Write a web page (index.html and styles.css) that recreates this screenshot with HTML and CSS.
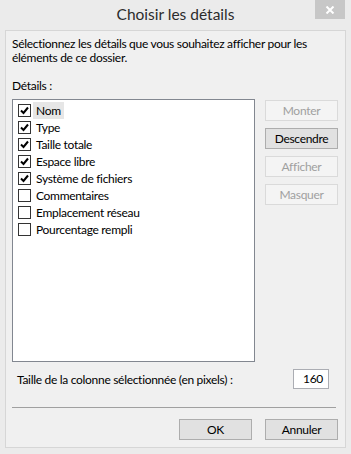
FILE: index.html
```html
<!DOCTYPE html>
<html lang="fr">
<head>
	<meta charset="utf-8">
	<title>Choisir les détails</title>
	<link rel="stylesheet" href="styles.css">
</head>
<body>
	<div class="window">
		<div class="titlebar">
			<span class="title">Choisir les détails</span>
			<!-- Close button -->
			<span class="close">
				<svg width="10" height="8" viewBox="0 0 10 8">
					<path d="M1.5 0.5 L8.5 7.5 M8.5 0.5 L1.5 7.5" stroke="#fff" stroke-width="2"/>
				</svg>
			</span>
		</div>

		<div class="client">
			<p class="desc">Sélectionnez les détails que vous souhaitez afficher pour les éléments de ce dossier.</p>
			<div class="label">Détails :</div>

			<div class="main">
				<ul class="list">
					<li><span class="box checked"></span><span class="name focus">Nom</span></li>
					<li><span class="box checked"></span><span class="name">Type</span></li>
					<li><span class="box checked"></span><span class="name">Taille totale</span></li>
					<li><span class="box checked"></span><span class="name">Espace libre</span></li>
					<li><span class="box checked"></span><span class="name">Système de fichiers</span></li>
					<li><span class="box"></span><span class="name">Commentaires</span></li>
					<li><span class="box"></span><span class="name">Emplacement réseau</span></li>
					<li><span class="box"></span><span class="name">Pourcentage rempli</span></li>
				</ul>
				<div class="side">
					<button type="button" class="btn" disabled>Monter</button>
					<button type="button" class="btn">Descendre</button>
					<button type="button" class="btn" disabled>Afficher</button>
					<button type="button" class="btn" disabled>Masquer</button>
				</div>
			</div>

			<div class="width-row">
				<span>Taille de la colonne sélectionnée (en pixels) :</span>
				<span class="field">160</span>
			</div>

			<div class="separator"></div>

			<div class="actions">
				<button type="button" class="btn">OK</button>
				<button type="button" class="btn">Annuler</button>
			</div>
		</div>
	</div>
</body>
</html>
```

FILE: styles.css
```css
:root {
	--frame: #ebebeb;
	--face: #f0f0f0;
	--text: #000;
	--disabled: #a0a0a0;
}

* { box-sizing: border-box; }

body {
	margin: 0;
	background: var(--frame);
	color: var(--text);
	font-family: Lato, "Noto Sans", sans-serif;
	font-size: 12px;
	letter-spacing: -0.3px;
}

.window {
	width: 351px;
	height: 454px;
}

.titlebar {
	position: relative;
	height: 30px;
	text-align: center;
}

.title {
	display: inline-block;
	padding-top: 4px;
	font-size: 15.5px;
	line-height: 20px;
	letter-spacing: 0;
	color: #2b2b2b;
}

.close {
	position: absolute;
	top: 0;
	right: 6px;
	width: 30px;
	height: 19px;
	background: #c7c7c7;
	display: flex;
	align-items: center;
	justify-content: center;
}

.client {
	margin: 0 5px;
	height: 418px;
	background: var(--face);
	border: 1px solid #d6d6d6;
	padding: 6px 7px 0 6px;
}

.desc {
	margin: 0;
	line-height: 14px;
}

.label {
	margin-top: 14px;
	line-height: 14px;
}

.main {
	display: flex;
	gap: 10px;
	margin-top: 6px;
}

.list {
	list-style: none;
	margin: 0;
	padding: 2px 0 0 5px;
	width: 243px;
	height: 263px;
	background: #fff;
	border: 1px solid #828790;
}

.list li {
	display: flex;
	align-items: center;
	height: 17px;
}

.box {
	width: 13px;
	height: 13px;
	border: 1px solid #333;
	background: #fff;
	margin-right: 2px;
	flex: none;
}

.box.checked {
	background: #fff url("data:image/svg+xml,%3Csvg xmlns='http://www.w3.org/2000/svg' width='11' height='11'%3E%3Cpath d='M2 5.5 L4.5 8 L9 2.5' fill='none' stroke='%23000' stroke-width='2'/%3E%3C/svg%3E") center no-repeat;
}

.name {
	padding: 0 3px;
	line-height: 17px;
}

.name.focus { background: #e6e6e6; }

.side {
	display: flex;
	flex-direction: column;
	gap: 7px;
	padding-top: 1px;
}

.btn {
	width: 73px;
	height: 21px;
	padding: 0;
	font: inherit;
	letter-spacing: inherit;
	color: var(--text);
	background: #e1e1e1;
	border: 1px solid #adadad;
	-webkit-appearance: none;
}

.btn:disabled {
	color: var(--disabled);
	background: #f4f4f4;
	border-color: #dadada;
}

.width-row {
	display: flex;
	align-items: center;
	justify-content: space-between;
	margin-top: 7px;
	padding: 0 9px 0 5px;
}

.field {
	width: 36px;
	height: 20px;
	line-height: 18px;
	text-align: right;
	padding-right: 5px;
	background: #fff;
	border: 1px solid #abadb3;
}

.separator {
	margin-top: 18px;
	margin-right: 2px;
	border-top: 1px solid #a0a0a0;
}

.actions {
	display: flex;
	justify-content: flex-end;
	gap: 13px;
	margin-top: 11px;
}
```
